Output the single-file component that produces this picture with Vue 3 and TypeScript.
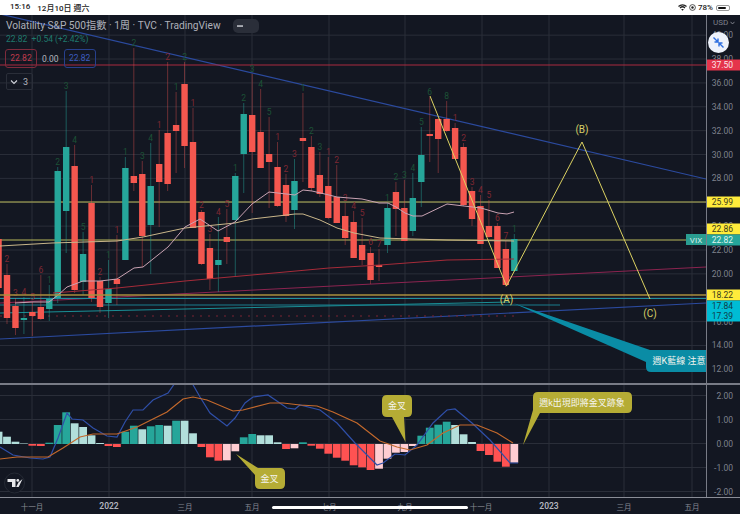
<script setup lang="ts">
type Candle = [number, number, number, number, "g" | "r", number, "g" | "r" | ""];
type Pt = [number, number];

// wick top, body top, body bottom, wick bottom, colour, count, count colour (page px)
const candles: Candle[] = [
  [226, 239, 288, 295, "r", 0, ""], [264, 275, 318, 324, "r", 2, "r"], [298, 306, 328, 335, "r", 3, "r"],
  [297, 318, 320, 334, "g", 4, "r"], [302, 312, 316, 336, "r", 5, "r"], [275, 307, 319, 320, "r", 6, "r"],
  [285, 299, 309, 321, "g", 1, "g"], [167, 171, 298, 303, "g", 2, "g"], [91, 147, 211, 253, "g", 3, "g"],
  [145, 166, 290, 293, "r", 4, "g"], [232, 254, 282, 295, "g", 5, "g"], [185, 203, 298, 302, "r", 1, "r"],
  [277, 281, 307, 313, "r", 2, "r"], [260, 289, 303, 318, "g", 1, "g"], [235, 279, 284, 305, "r", 1, "r"],
  [157, 168, 260, 260, "g", 1, "g"], [48, 176, 183, 191, "r", 2, "g"], [161, 174, 236, 267, "r", 3, "g"],
  [143, 186, 225, 274, "g", 4, "g"], [130, 164, 182, 227, "r", 1, "r"], [62, 133, 184, 191, "r", 2, "r"],
  [92, 125, 131, 173, "r", 1, "g"], [62, 84, 146, 168, "r", 2, "g"], [108, 142, 228, 228, "r", 1, "r"],
  [210, 212, 264, 265, "r", 2, "r"], [234, 248, 279, 290, "r", 3, "r"], [217, 260, 265, 292, "g", 4, "r"],
  [209, 237, 242, 264, "r", 5, "r"], [173, 176, 220, 277, "g", 1, "g"], [103, 114, 154, 193, "g", 2, "g"],
  [74, 115, 152, 213, "r", 3, "g"], [89, 132, 168, 168, "r", 4, "g"], [117, 154, 162, 208, "r", 5, "g"],
  [142, 167, 206, 207, "r", 1, "r"], [174, 185, 216, 222, "r", 2, "r"], [159, 181, 210, 229, "g", 3, "r"],
  [93, 138, 141, 182, "r", 1, "g"], [136, 147, 188, 191, "r", 2, "g"], [152, 175, 194, 197, "r", 3, "g"],
  [157, 186, 218, 219, "r", 1, "r"], [165, 197, 223, 223, "r", 2, "r"], [203, 216, 238, 245, "r", 3, "r"],
  [211, 222, 258, 258, "r", 4, "r"], [218, 245, 260, 265, "r", 5, "r"], [247, 253, 280, 284, "r", 6, "r"],
  [249, 265, 267, 281, "r", 7, "r"], [203, 208, 245, 253, "g", 1, "g"], [182, 192, 209, 236, "r", 2, "g"],
  [180, 208, 241, 241, "r", 3, "g"], [173, 198, 231, 236, "g", 4, "g"], [127, 155, 182, 207, "g", 5, "g"],
  [97, 134, 136, 162, "r", 6, "g"], [118, 119, 139, 173, "r", 0, ""], [101, 119, 131, 132, "r", 8, "g"],
  [123, 128, 159, 159, "r", 1, "r"], [143, 147, 205, 206, "r", 2, "r"], [187, 191, 219, 226, "r", 3, "r"],
  [195, 206, 244, 244, "r", 4, "r"], [200, 226, 237, 238, "r", 5, "r"], [223, 226, 268, 268, "r", 6, "r"],
  [241, 249, 285, 287, "r", 7, "r"], [234, 239, 271, 272, "g", 1, "g"],
];

const hist = [
  12.3, 7.3, 2.3, 0.5, -1.7, -2, 1.3, 19, 31.7, 20.7, 17, 8.7, 1, -2, -3, 12.3, 18.3, 14.7, 17.7, 19, 18.3,
  23.3, 23.3, 10.7, -3, -13.3, -16.7, -16.3, -7.3, 6.7, 10, 8.7, 8.7, 1.7, -5, -4.3, 1.7, -1.7, -4.7, -9.7,
  -13.7, -16.7, -21.3, -23.3, -26, -24.7, -14.7, -8.7, -8, -2, 8.3, 16.3, 19.3, 22.3, 19, 9.7, 2, -7, -11,
  -17.7, -22.7, -18.7,
];

const barX = (i: number) => 7 + 8.455 * (i - 1);
const priceY = (p: number) => 250 - (p - 22) * 11.935;
const points = (pts: Pt[]) => pts.map((p) => p.join(",")).join(" ");

const verticals = [32, 109, 185, 252, 329, 405, 482, 549, 624, 692];
const priceTicks = [40, 38, 36, 34, 32, 30, 28, 26, 24, 22, 20, 18, 16, 14, 12];
// 26 and 18 sit fully behind their tags
const priceLabels = priceTicks.filter((t) => t !== 26 && t !== 18);
const macdTicks = [
  { label: "2.00", y: 396 }, { label: "1.00", y: 420 }, { label: "0.00", y: 444 },
  { label: "-1.00", y: 468 }, { label: "-2.00", y: 492 },
];
const tags = [
  { label: "37.50", y: 65, cls: "tag-red" }, { label: "25.99", y: 202, cls: "tag-yellow" },
  { label: "22.86", y: 229, cls: "tag-yellow" }, { label: "22.82", y: 239.5, cls: "tag-teal" },
  { label: "18.22", y: 295, cls: "tag-yellow" }, { label: "17.84", y: 305.5, cls: "tag-cyan" },
  { label: "17.39", y: 316, cls: "tag-cyan" },
];
const months = [
  { label: "十一月", x: 32 }, { label: "2022", x: 109, bold: true }, { label: "三月", x: 185 }, { label: "五月", x: 252 },
  { label: "七月", x: 329 }, { label: "九月", x: 405 }, { label: "十一月", x: 481 }, { label: "2023", x: 549, bold: true },
  { label: "三月", x: 624 }, { label: "五月", x: 692 },
];

const fastMa: Pt[] = [[15, 303], [33, 302], [49, 302], [58, 295], [67, 287], [83, 281], [100, 281], [117, 279], [134, 268], [143, 267], [168, 247], [185, 227], [200, 219], [218, 231], [235, 222], [252, 204], [269, 192], [295, 195], [303, 190], [312, 191], [329, 195], [337, 197], [362, 199], [379, 203], [388, 203], [396, 207], [405, 213], [413, 216], [422, 216], [447, 204], [464, 206], [481, 208], [498, 213], [507, 214], [514, 212]];
const slowMa: Pt[] = [[0, 246], [52, 243], [117, 241], [143, 237], [185, 228], [235, 223], [252, 219], [295, 214], [303, 214], [320, 220], [337, 228], [354, 233], [380, 238], [413, 239], [447, 240], [514, 241]];
const redMa: Pt[] = [[53, 293], [117, 288], [185, 281], [252, 275], [329, 268], [380, 265], [447, 260], [514, 259]];

const macdBlue: Pt[] = [[0, 447], [13, 455], [30, 458], [43, 459], [50, 457], [58, 438], [67, 413], [72, 419], [83, 420], [93, 428], [107, 436], [117, 437], [125, 422], [133, 410], [143, 410], [153, 400], [168, 393], [175, 383], [192, 383], [200, 397], [210, 413], [227, 426], [235, 418], [245, 403], [253, 397], [268, 395], [287, 408], [295, 409], [300, 405], [320, 410], [337, 423], [355, 443], [377, 465], [383, 463], [395, 454], [405, 455], [417, 445], [433, 423], [447, 410], [455, 409], [472, 423], [490, 440], [510, 463], [518, 463]];
const macdOrange: Pt[] = [[0, 459], [17, 457], [48, 457], [63, 448], [80, 437], [93, 434], [117, 434], [137, 427], [167, 412], [183, 399], [193, 397], [207, 400], [233, 411], [243, 410], [270, 403], [283, 403], [300, 405], [317, 406], [333, 412], [357, 423], [380, 441], [397, 447], [410, 450], [427, 445], [443, 433], [460, 425], [477, 425], [497, 433], [513, 443]];

const histColor = (i: number) => {
  const v = hist[i];
  const prev = i > 0 ? hist[i - 1] : v;
  if (v >= 0) return v > prev ? "#26a69a" : "#b2dfdb";
  return v < prev ? "#ff5252" : "#ffcdd2";
};
</script>

<template>
  <div class="screen">
    <header class="status-bar">
      <div class="status-left">
        <span>15:16</span>
        <span>12月10日 週六</span>
      </div>
      <div class="status-right">
        <svg width="9" height="7" viewBox="0 0 18 14">
          <path d="M1 5c4.500-4.500 11.500-4.500 16 0M4 8c2.800-2.800 7.200-2.800 10 0" fill="none" stroke="#222" stroke-width="2.400" />
          <path d="M9 13.500 6.500 10.800c1.400-1.200 3.600-1.200 5 0z" fill="#222" />
        </svg>
        <svg width="7" height="7" viewBox="0 0 14 14">
          <circle cx="7" cy="7" r="5.800" fill="none" stroke="#222" stroke-width="1.500" />
          <circle cx="7" cy="7" r="2.400" fill="#222" />
        </svg>
        <span>78%</span>
        <span class="battery"><i class="battery-level"></i></span>
      </div>
    </header>

    <div class="pane main-pane">
      <svg class="plot" width="706" height="368" viewBox="0 15 706 368">
        <line v-for="t in priceTicks" :key="t" x1="0" x2="706" :y1="priceY(t)" :y2="priceY(t)" class="grid" />
        <line v-for="x in verticals" :key="x" :x1="x" :x2="x" y1="15" y2="383" class="grid" />

        <line x1="0" y1="14" x2="706" y2="179" stroke="#2b4a9e" stroke-width="1.200" />
        <line x1="0" y1="339" x2="706" y2="303" stroke="#2b4a9e" stroke-width="1.200" />
        <line x1="0" y1="303" x2="706" y2="267" stroke="#8c2450" stroke-width="1" />
        <line x1="0" y1="65" x2="706" y2="65" stroke="#a92a3e" stroke-width="1.200" />
        <line x1="0" y1="202" x2="706" y2="202" stroke="#b9b85a" stroke-width="1" />
        <line x1="0" y1="240" x2="706" y2="240" stroke="#b9b85a" stroke-width="1" />
        <line x1="0" y1="298.500" x2="706" y2="298.500" stroke="#1f8fa0" stroke-width="1" />
        <line x1="0" y1="305" x2="560" y2="305" stroke="#1a7f8e" stroke-width="1" />
        <line x1="0" y1="313" x2="510" y2="302" stroke="#1a8f96" stroke-width="1" />
        <line x1="0" y1="316" x2="515" y2="316" stroke="#7a2433" stroke-width="1" stroke-dasharray="2 6" />

        <g v-for="(c, i) in candles" :key="i">
          <line :x1="barX(i)" :x2="barX(i)" :y1="c[0]" :y2="c[3]" :class="c[4] === 'g' ? 'wick-up' : 'wick-down'" />
          <rect :x="barX(i) - 3.200" :y="c[1]" width="6.400" :height="c[2] - c[1]" :class="c[4] === 'g' ? 'body-up' : 'body-down'" />
          <text v-if="c[5]" :x="barX(i)" :y="c[0] - 2.500" class="count" :class="c[6] === 'g' ? 'count-up' : 'count-down'">{{ c[5] }}</text>
        </g>

        <polyline :points="points(redMa)" fill="none" stroke="#a62b39" stroke-width="1" />
        <polyline :points="points(slowMa)" fill="none" stroke="#c9b68a" stroke-width="1" />
        <polyline :points="points(fastMa)" fill="none" stroke="#c9a3b3" stroke-width="1" />
        <line x1="0" y1="295" x2="706" y2="295" stroke="#a98f3e" stroke-width="1.600" />

        <polyline points="430,96 506.500,286 582,142 650,299" fill="none" stroke="#dcd262" stroke-width="1" />
        <text x="506.500" y="303" class="wave">(A)</text>
        <text x="582" y="133" class="wave">(B)</text>
        <text x="650" y="317" class="wave">(C)</text>

        <path d="M513 303 650 350H706V372H651Q646 372 646 367V362Z" class="note-teal" />
        <text x="679" y="363.500" class="note-text">週K藍線 注意</text>

        <rect x="686" y="234" width="20" height="11" fill="#2a9d91" />
        <text x="696" y="242.500" class="vix">VIX</text>

        <g transform="translate(233 19)">
          <rect width="26" height="14" rx="5" fill="#2a2e39" />
          <rect x="4" y="6.300" width="6" height="1.500" fill="#c8cad0" />
        </g>
      </svg>

      <div class="price-axis">
        <span class="usd">
          USD
          <svg width="5" height="4" viewBox="0 0 5 4"><path d="M0.500 0.800 2.500 3 4.500 0.800" fill="none" stroke="#9598a1" stroke-width="0.800" /></svg>
        </span>
        <span v-for="t in priceLabels" :key="t" class="tick" :style="{ top: `${priceY(t) - 15}px` }">{{ t.toFixed(2) }}</span>
        <span v-for="t in tags" :key="t.label" class="tag" :class="t.cls" :style="{ top: `${t.y - 15}px` }">{{ t.label }}</span>
      </div>

      <div class="legend">
        <div class="legend-title">Volatility S&amp;P 500指數 · 1周 · TVC · TradingView</div>
        <div class="legend-change">22.82 &nbsp;+0.54 (+2.42%)</div>
        <div class="legend-values">
          <span class="box box-red">22.82</span>
          <span class="zero">0.00</span>
          <span class="box box-blue">22.82</span>
        </div>
        <div class="legend-toggle">
          <svg width="8" height="6" viewBox="0 0 8 6"><path d="M1 1.500 4 4.500 7 1.500" fill="none" stroke="#d1d4dc" stroke-width="1.100" /></svg>
          <span>3</span>
        </div>
      </div>

      <button class="compress" type="button">
        <svg width="13" height="13" viewBox="0 0 13 13">
          <path d="M1.500 1.500 6 6M6 2.500V6H2.500M11.500 11.500 7 7M7 10.500V7H10.500" fill="none" stroke="#2f6fe0" stroke-width="1.400" />
        </svg>
      </button>
    </div>

    <div class="pane macd-pane">
      <svg class="plot" width="706" height="112" viewBox="0 385 706 112">
        <line v-for="t in macdTicks" :key="t.y" x1="0" x2="706" :y1="t.y - 0.500" :y2="t.y - 0.500" class="grid" />
        <line v-for="x in verticals" :key="x" :x1="x" :x2="x" y1="385" y2="497" class="grid" />

        <rect
          v-for="(v, i) in hist"
          :key="i"
          :x="barX(i) - 3.900"
          :y="v >= 0 ? 444 - v : 444"
          width="7.800"
          :height="Math.abs(v)"
          :fill="histColor(i)"
        />
        <polyline :points="points(macdBlue)" fill="none" stroke="#2f4fa8" stroke-width="1.200" />
        <polyline :points="points(macdOrange)" fill="none" stroke="#c4692c" stroke-width="1.200" />

        <path d="M236 454 258 468H280Q285 468 285 473V484Q285 489 280 489H260Q255 489 255 484V475Z" class="note-olive" />
        <text x="269.500" y="481.500" class="note-text">金叉</text>

        <path d="M387 395H407Q412 395 412 400V412Q412 417 407 417H404L405.500 442 392 417H387Q382 417 382 412V400Q382 395 387 395Z" class="note-olive" />
        <text x="397" y="408.500" class="note-text">金叉</text>

        <path d="M538 392H627Q632 392 632 397V408Q632 413 627 413H540L523 445 533 410V397Q533 392 538 392Z" class="note-olive" />
        <text x="582" y="405.500" class="note-text">週k出現即將金叉跡象</text>

        <g transform="translate(14.500 483)">
          <circle r="10" fill="#131722" stroke="#2a2e39" stroke-width="0.800" />
          <path d="M-7-4H1V4H-2.500V-1H-7ZM8-4 4.200 4H1.700L3.900-0.500Z" fill="#e8e9ec" />
          <circle cx="3.300" cy="-2.600" r="1.400" fill="#e8e9ec" />
        </g>
      </svg>
      <div class="price-axis">
        <span v-for="t in macdTicks" :key="t.y" class="tick" :style="{ top: `${t.y - 385}px` }">{{ t.label }}</span>
      </div>
    </div>

    <div class="time-axis">
      <span
        v-for="m in months"
        :key="m.label + m.x"
        class="month"
        :class="{ 'month-bold': m.bold }"
        :style="{ left: `${m.x}px` }"
      >{{ m.label }}</span>
      <i class="home-bar"></i>
    </div>
  </div>
</template>

<style>
html,
body {
  margin: 0;
  background: #131722;
}
</style>

<style scoped>
.screen {
  width: 740px;
  height: 514px;
  display: flex;
  flex-direction: column;
  overflow: hidden;
  background: #131722;
  font-family: Roboto, "Noto Sans CJK TC", sans-serif;
}

.status-bar {
  height: 15px;
  flex: none;
  display: flex;
  align-items: center;
  justify-content: space-between;
  padding: 0 10px;
  background: #fff;
  color: #222;
  font-size: 8px;
  font-weight: 500;
}

.status-left {
  display: flex;
  gap: 7px;
}

.status-right {
  display: flex;
  align-items: center;
  gap: 2px;
}

.battery {
  width: 14px;
  height: 6px;
  margin-left: 1px;
  padding: 1px;
  box-sizing: border-box;
  border: 0.5px solid #999;
  border-radius: 2px;
}

.battery-level {
  display: block;
  width: 78%;
  height: 100%;
  background: #111;
  border-radius: 1px;
}

.pane {
  position: relative;
  flex: none;
  display: flex;
}

.main-pane {
  height: 368px;
  border-bottom: 2px solid #787b86;
}

.macd-pane {
  height: 112px;
  border-bottom: 1px solid #8a8d97;
}

.plot {
  display: block;
  flex: none;
}

.grid {
  stroke: #2a2e39;
  stroke-width: 1;
}

.wick-up {
  stroke: #26a69a;
  stroke-width: 0.800;
  opacity: 0.600;
}

.wick-down {
  stroke: #ef5350;
  stroke-width: 0.800;
  opacity: 0.500;
}

.body-up {
  fill: #26a69a;
}

.body-down {
  fill: #f4574f;
}

.count {
  font-size: 8.500px;
  text-anchor: middle;
}

.count-up {
  fill: #1c5236;
}

.count-down {
  fill: #7f2833;
}

.wave {
  fill: #d8cf66;
  font-size: 10px;
  text-anchor: middle;
}

.note-teal {
  fill: #0a8ca5;
}

.note-olive {
  fill: #b5ac35;
}

.note-text {
  fill: #f4f4ee;
  font-size: 9px;
  text-anchor: middle;
}

.vix {
  fill: #d5efec;
  font-size: 8px;
  text-anchor: middle;
}

.price-axis {
  position: relative;
  flex: 1;
  border-left: 1px solid #787b86;
  font-size: 8.500px;
  color: #7f828d;
}

.usd {
  position: absolute;
  top: 3px;
  left: 6px;
  font-size: 8px;
  white-space: nowrap;
}

.tick {
  position: absolute;
  right: 7px;
  transform: translateY(-50%);
}

.tag {
  position: absolute;
  left: 0;
  right: 0;
  height: 11px;
  line-height: 11px;
  padding-right: 7px;
  text-align: right;
  transform: translateY(-50%);
}

.tag-red {
  background: #e5344b;
  color: #fbe7ea;
}

.tag-yellow {
  background: #ffeb3b;
  color: #3b3a1c;
}

.tag-teal {
  background: #26a69a;
  color: #dff4f1;
}

.tag-cyan {
  background: #00bcd4;
  color: #0f3c48;
}

.legend {
  position: absolute;
  top: 4px;
  left: 6px;
  display: flex;
  flex-direction: column;
  align-items: flex-start;
}

.legend-title {
  height: 14px;
  line-height: 14px;
  font-size: 10.200px;
  color: #aeb1ba;
}

.legend-change {
  height: 13px;
  line-height: 13px;
  font-size: 8.500px;
  color: #1f7a6d;
}

.legend-values {
  display: flex;
  align-items: center;
  gap: 5px;
  margin: 3px 0 0 -1px;
  font-size: 8.500px;
}

.box {
  width: 32px;
  height: 19px;
  box-sizing: border-box;
  line-height: 17px;
  text-align: center;
  border-radius: 3px;
  border: 1px solid;
}

.box-red {
  border-color: #7e2b3c;
  color: #c23a4c;
}

.box-blue {
  border-color: #27408d;
  color: #3c5cc0;
}

.zero {
  color: #b2b5be;
}

.legend-toggle {
  display: flex;
  align-items: center;
  gap: 5px;
  height: 15px;
  margin: 5px 0 0;
  padding: 0 4px 0 3px;
  border-radius: 2px;
  border: 1px solid #2a2e39;
  font-size: 9px;
  color: #b2b5be;
}

.compress {
  position: absolute;
  top: 17px;
  left: 708px;
  width: 21px;
  height: 21px;
  padding: 0;
  display: flex;
  align-items: center;
  justify-content: center;
  border: none;
  border-radius: 50%;
  background: #eef2fb;
}

.time-axis {
  position: relative;
  flex: 1;
  font-size: 7.500px;
  color: #868993;
}

.month {
  position: absolute;
  top: 3px;
  transform: translateX(-50%);
}

.month-bold {
  font-size: 8.500px;
  font-weight: 600;
  color: #b2b5be;
}

.home-bar {
  position: absolute;
  left: 272px;
  top: 7.500px;
  width: 196px;
  height: 3.500px;
  background: #fff;
  border-radius: 2px;
}
</style>
